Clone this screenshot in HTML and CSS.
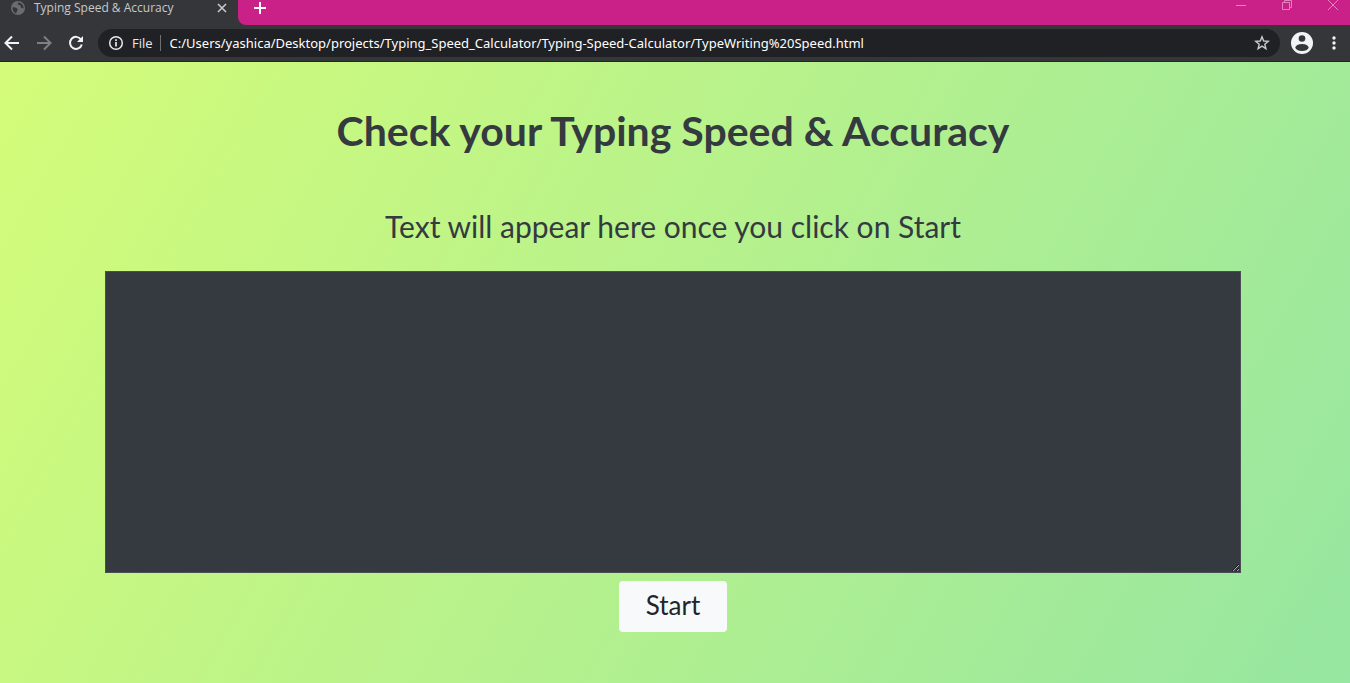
FILE: index.html
```html
<!DOCTYPE html>
<html lang="en">
<head>
<meta charset="utf-8">
<title>Typing Speed &amp; Accuracy</title>
<link rel="stylesheet" href="styles.css">
</head>
<body>
<header class="browser">
  <div class="tab-strip">
    <div class="tab">
      <svg class="globe" width="16" height="16" viewBox="0 0 16 16"><circle cx="8" cy="8" r="7" fill="#6b6c6f"/><path d="M2.500 7.500C5 7 7 8 7.500 9.500S6 11 6.500 13.500C4 13 2.500 10.500 2.500 7.500ZM8.500 2.500C7 3.500 8 5 9.500 5S10 7.500 12 8 13.500 9 13.500 7C13 4.500 11 3 8.500 2.500Z" fill="#35363a"/></svg>
      <span class="tab-title">Typing Speed &amp; Accuracy</span>
      <button class="icon-btn" aria-label="Close tab"><svg width="10" height="10" viewBox="0 0 10 10"><path d="M1 1 9 9M9 1 1 9" stroke="#c8c9cb" stroke-width="1.6"/></svg></button>
    </div>
    <div class="strip-rest">
      <button class="icon-btn" aria-label="New tab"><svg width="12" height="12" viewBox="0 0 12 12"><path d="M6 0V12M0 6H12" stroke="#fff" stroke-width="2"/></svg></button>
      <div class="window-controls">
        <button class="icon-btn" aria-label="Minimize"><svg width="12" height="12" viewBox="0 0 12 12"><path d="M1 6.5H11" stroke="#e284bd"/></svg></button>
        <button class="icon-btn" aria-label="Restore"><svg width="12" height="12" viewBox="0 0 12 12"><path d="M1.500 3.500H8.500V10.500H1.500ZM3.500 3.500V1.500H10.500V8.500H8.500" fill="none" stroke="#e284bd"/></svg></button>
        <button class="icon-btn" aria-label="Close"><svg width="12" height="12" viewBox="0 0 12 12"><path d="M1 1 11 11M11 1 1 11" stroke="#e284bd"/></svg></button>
      </div>
    </div>
  </div>
  <div class="toolbar">
    <nav class="nav-buttons">
      <button class="icon-btn" aria-label="Back"><svg width="16" height="16" viewBox="0 0 16 16"><path d="M15 8H2.500M8 1.500 1.500 8 8 14.500" fill="none" stroke="#f1f3f4" stroke-width="2"/></svg></button>
      <button class="icon-btn" aria-label="Forward"><svg width="16" height="16" viewBox="0 0 16 16"><path d="M1 8H13.500M8 1.500 14.500 8 8 14.500" fill="none" stroke="#7f8083" stroke-width="2"/></svg></button>
      <button class="icon-btn" aria-label="Reload"><svg width="16" height="16" viewBox="0 0 16 16"><path d="M13 4.500A6 6 0 1 0 13.800 9.500" fill="none" stroke="#f1f3f4" stroke-width="2"/><path d="M15 1V7H9Z" fill="#f1f3f4"/></svg></button>
    </nav>
    <div class="omnibox">
      <svg width="16" height="16" viewBox="0 0 16 16"><circle cx="8" cy="8" r="6.300" fill="none" stroke="#e8eaed" stroke-width="1.500"/><path d="M8 7V11.500M8 4.300V6" stroke="#e8eaed" stroke-width="1.700"/></svg>
      <label class="scheme" for="url">File</label>
      <input class="url" id="url" type="text" value="C:/Users/yashica/Desktop/projects/Typing_Speed_Calculator/Typing-Speed-Calculator/TypeWriting%20Speed.html">
      <button class="icon-btn" aria-label="Bookmark"><svg width="16" height="16" viewBox="0 0 16 16"><path d="M8 1.800 9.700 6 14.300 6.300 10.800 9.200 11.900 13.700 8 11.200 4.100 13.700 5.200 9.200 1.700 6.300 6.300 6Z" fill="none" stroke="#c8cacd" stroke-width="1.400"/></svg></button>
    </div>
    <button class="icon-btn" aria-label="Profile"><svg width="22" height="22" viewBox="0 0 22 22"><circle cx="11" cy="11" r="11" fill="#f1f3f4"/><circle cx="11" cy="6.500" r="3.300" fill="#35363a"/><ellipse cx="11" cy="15.500" rx="6.600" ry="3.500" fill="#35363a"/></svg></button>
    <button class="icon-btn" aria-label="Menu"><svg width="4" height="14" viewBox="0 0 4 14"><g fill="#f1f3f4"><circle cx="2" cy="2" r="1.700"/><circle cx="2" cy="7" r="1.700"/><circle cx="2" cy="12" r="1.700"/></g></svg></button>
  </div>
</header>
<main class="page">
  <h1 class="heading">Check your Typing Speed &amp; Accuracy</h1>
  <label class="prompt" for="typing">Text will appear here once you click on Start</label>
  <textarea class="typing" id="typing"></textarea>
  <button class="start">Start</button>
</main>
</body>
</html>
```
FILE: styles.css
```css
* {
  box-sizing: border-box;
}

body {
  margin: 0;
  min-height: 100vh;
  display: flex;
  flex-direction: column;
  font-family: Lato, "Liberation Sans", sans-serif;
}

svg {
  display: block;
}

.icon-btn {
  flex: none;
  padding: 0;
  border: 0;
  background: none;
}

.browser {
  background: #35363a;
  border-bottom: 1px solid #242528;
  font-family: "Open Sans", "Noto Sans", sans-serif;
}

.tab-strip {
  display: flex;
  height: 25px;
}

.tab {
  display: flex;
  align-items: center;
  gap: 8px;
  width: 238px;
  height: 16px;
  padding: 0 11px 0 10px;
}

.tab-title {
  flex: 1;
  color: #c8c9cb;
  font-size: 12px;
  line-height: 16px;
  white-space: nowrap;
}

.strip-rest {
  flex: 1;
  display: flex;
  justify-content: space-between;
  align-items: flex-start;
  padding: 2px 11px 0 16px;
  background: #c92187;
  border-bottom-left-radius: 8px;
}

.window-controls {
  display: flex;
  gap: 34px;
  margin-top: -3px;
}

.toolbar {
  display: flex;
  align-items: center;
  height: 36px;
  padding: 0 14px 0 4px;
  gap: 11px;
}

.toolbar > :last-child {
  margin-left: 8px;
}

.nav-buttons {
  display: flex;
  gap: 16px;
  margin-right: 3px;
}

.omnibox {
  flex: 1;
  display: flex;
  align-items: center;
  height: 28px;
  padding: 0 10px;
  border-radius: 14px;
  background: #202124;
}

.scheme {
  margin-left: 8px;
  padding-right: 7px;
  border-right: 1px solid #6d6f73;
  color: #e8eaed;
  font-size: 13px;
  line-height: 16px;
}

.url {
  flex: 1;
  min-width: 0;
  padding: 0 9px;
  border: 0;
  outline: 0;
  background: none;
  color: #fff;
  font-family: "Noto Sans", "Open Sans", sans-serif;
  font-size: 13px;
}

.page {
  flex: 1;
  display: flex;
  flex-direction: column;
  align-items: center;
  padding: 41px 109px 48px 105px;
  background: linear-gradient(120deg, #d4fc79 0%, #96e6a1 100%);
  color: #343a40;
}

.heading {
  margin: 0 0 47px;
  font-size: 41px;
  font-weight: 700;
  line-height: 56px;
}

.prompt {
  margin-bottom: 25px;
  font-size: 30px;
  line-height: 40px;
}

.typing {
  width: 100%;
  height: 302px;
  margin-bottom: 8px;
  border: 1px solid #4b4e54;
  background: #343a40;
  color: #fff;
  font: inherit;
}

.start {
  padding: 4px 27px 6px;
  border: 0;
  border-radius: 4px;
  background: #f8f9fa;
  color: #212529;
  font-family: inherit;
  font-size: 26px;
  line-height: 41px;
}
```
